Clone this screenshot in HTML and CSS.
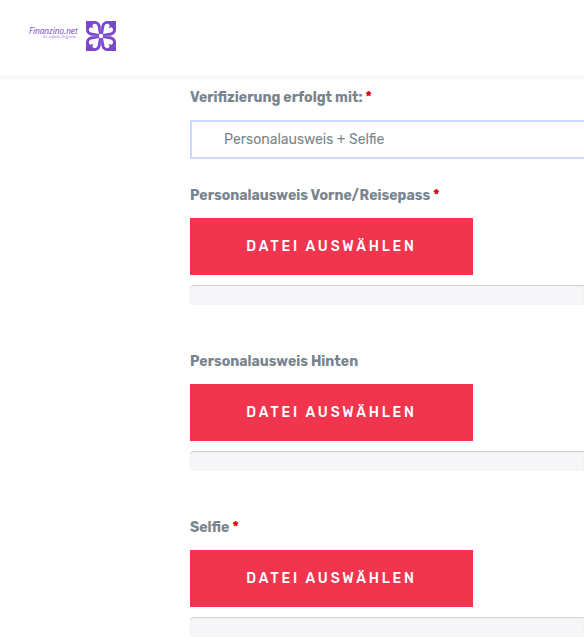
FILE: index.html
```html
<!DOCTYPE html>
<html lang="de">
<head>
    <meta charset="UTF-8">
    <meta name="viewport" content="width=device-width, initial-scale=1.0">
    <title>Finanzino.net - Verifizierung</title>
    <link rel="stylesheet" href="styles.css">
</head>
<body>
    <header class="header">
        <div class="brand">
            <span class="brand-name">Finanzino.net</span>
            <span class="brand-claim">Die einfache Zielgerade</span>
        </div>
        <svg class="logo" viewBox="0 0 30 30">
            <defs>
                <g id="petal">
                    <path fill="#7a48cc" d="M0 0H8.5C12 0 14.3 2.5 14.8 6L15 15L6 14.8C2.5 14.3 0 12 0 8.5Z"/>
                    <path fill="#fff" d="M13 13L5 11.6C2.2 10.6 2.2 7 4.8 6.3L7.3 7.3L6.3 4.8C7 2.2 10.6 2.2 11.6 5Z"/>
                </g>
            </defs>
            <use href="#petal"/>
            <use href="#petal" transform="translate(30 0) scale(-1 1)"/>
            <use href="#petal" transform="translate(0 30) scale(1 -1)"/>
            <use href="#petal" transform="translate(30 30) scale(-1 -1)"/>
            <circle cx="15" cy="15" r="2.2" fill="#fff"/>
        </svg>
    </header>

    <form class="form">
        <div class="group group-select">
            <label class="label">Verifizierung erfolgt mit: <span class="required">*</span></label>
            <div class="select">Personalausweis + Selfie</div>
        </div>
        <div class="group">
            <label class="label">Personalausweis Vorne/Reisepass <span class="required">*</span></label>
            <button type="button" class="btn">Datei auswählen</button>
            <div class="progress"></div>
        </div>
        <div class="group">
            <label class="label">Personalausweis Hinten</label>
            <button type="button" class="btn">Datei auswählen</button>
            <div class="progress"></div>
        </div>
        <div class="group group-last">
            <label class="label">Selfie <span class="required">*</span></label>
            <button type="button" class="btn">Datei auswählen</button>
            <div class="progress"></div>
        </div>
    </form>
</body>
</html>
```

FILE: styles.css
```css
body {
    margin: 0;
    background: #fff;
    font-family: Rubik, Roboto, sans-serif;
    color: #78858f;
}

.header {
    display: flex;
    align-items: flex-start;
    height: 76px;
    box-sizing: border-box;
    padding: 21px 0 0 29px;
    box-shadow: 0 1px 5px rgba(80, 60, 110, 0.12);
}

.brand {
    display: flex;
    flex-direction: column;
    width: 57px;
    padding-top: 5px;
    color: #7440c6;
    white-space: nowrap;
}

.brand-name {
    font: italic 500 8.2px/10px "Open Sans", sans-serif;
}

.brand-claim {
    padding-left: 14px;
    font: italic 3px/3px "Open Sans", sans-serif;
    letter-spacing: 0.1px;
    opacity: 0.8;
}

.logo {
    width: 30px;
    height: 30px;
}

.form {
    padding: 9px 0 0 190px;
}

.group {
    margin-bottom: 44px;
}

.group-select {
    margin-bottom: 24px;
}

.group-last {
    margin-bottom: 0;
}

.label {
    display: block;
    margin-bottom: 9px;
    font-size: 14px;
    line-height: 26px;
    font-weight: 700;
    white-space: nowrap;
}

.required {
    color: #e00000;
}

.select {
    box-sizing: border-box;
    height: 39px;
    padding-left: 32px;
    border: 2px solid #cbd8ff;
    border-right: none;
    font-size: 14px;
    line-height: 35px;
}

.btn {
    display: block;
    width: 283px;
    height: 57px;
    margin-bottom: 10px;
    padding: 0;
    border: none;
    background: #f2354f;
    color: #fff;
    font: 500 14px/57px Rubik, Roboto, sans-serif;
    letter-spacing: 2.8px;
    text-transform: uppercase;
}

.progress {
    height: 20px;
    border-radius: 4px 0 0 4px;
    background: #f6f5f7;
    box-shadow: inset 0 1px 1px #d2d4d2;
}
```
